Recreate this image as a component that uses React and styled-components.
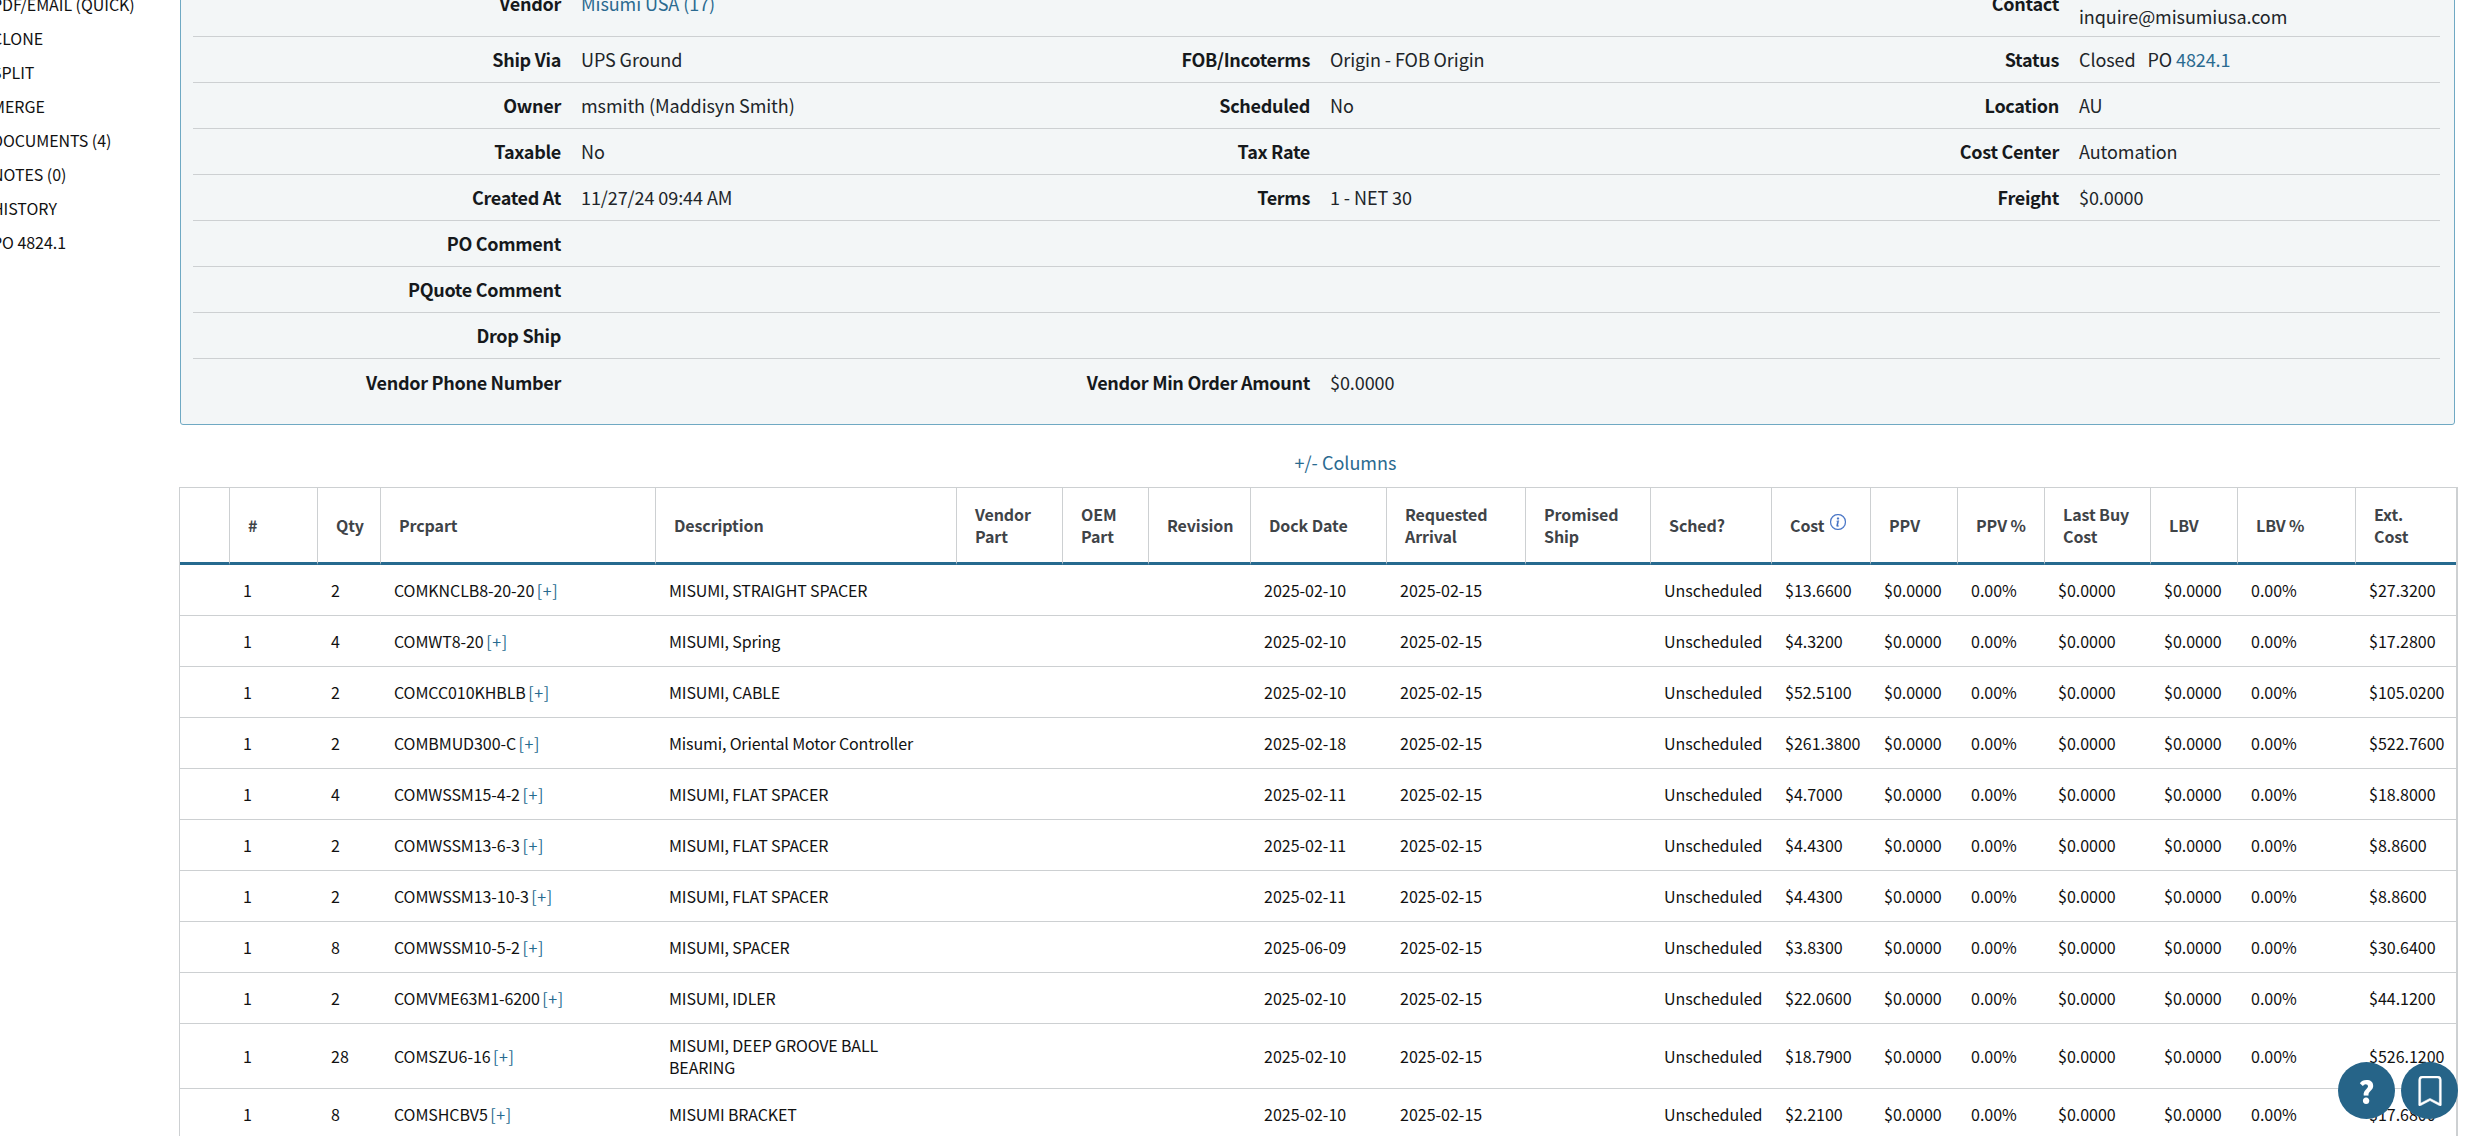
import React from 'react';
import styled, {createGlobalStyle} from 'styled-components';
import {BsBookmark, BsInfoCircle} from 'react-icons/bs';

const GlobalStyle = createGlobalStyle`
  html, body {
    margin: 0;
    height: 100%;
    overflow: hidden;
    background: #fff;
  }
  body {
    font-family: "Noto Sans CJK SC", "Liberation Sans", sans-serif;
    color: #212529;
  }
  * {
    box-sizing: border-box;
  }
`;

const Page = styled.div`
  display: grid;
  grid-template-columns: 186px 2279px;
  align-items: start;
  margin: -30px 0 0 -7px;
`;

const SideNav = styled.nav`
  display: flex;
  flex-direction: column;
  margin-left: -1px;
  padding-top: 17px;
`;

const SideLink = styled.a`
  height: 34px;
  line-height: 34px;
  font-size: 16px;
  letter-spacing: -0.05px;
  color: #111;
`;

const Main = styled.main`
  display: flex;
  flex-direction: column;
`;

const InfoPanel = styled.section`
  margin: 0 3px 0 1px;
  padding: 0 14px 19px 12px;
  background: #f3f6f7;
  border: 1px solid #6fa9c3;
  border-radius: 3px;
`;

const InfoRow = styled.div`
  display: grid;
  grid-template-columns: repeat(3, 1fr);
  height: ${(p) => (p.$first ? '66px' : '46px')};
  border-bottom: 1px solid #cdd0d2;
  &:last-child {
    border-bottom: none;
  }
`;

const FieldCell = styled.div`
  display: grid;
  grid-template-columns: 368px 1fr;
  column-gap: 20px;
  align-items: center;
  font-size: 18px;
  line-height: 25px;
`;

const Label = styled.div`
  font-weight: 600;
  letter-spacing: -0.3px;
  text-align: right;
  color: #16191c;
`;

const Value = styled.div`
  letter-spacing: -0.08px;
  color: #212529;
`;

const Link = styled.a`
  color: #2a6a90;
`;

const PartLink = styled(Link)`
  margin-left: -1px;
  letter-spacing: 0.6px;
  color: #266a8f;
`;

const ColumnsToggle = styled.div`
  height: 62px;
  padding: 25px 0 0 54px;
  text-align: center;
  font-size: 18px;
  line-height: 25px;
`;

const LinesTable = styled.table`
  width: 2279px;
  table-layout: fixed;
  border-collapse: separate;
  border-spacing: 0;
  border-top: 1px solid #cdd0d2;
  border-left: 1px solid #cdd0d2;
  border-right: 2px solid #cdd0d2;
`;

const LineCol = styled.col`
  width: ${(p) => p.$w}px;
`;

const HeadCell = styled.th`
  height: 77px;
  padding: 8px 18px;
  text-align: left;
  vertical-align: middle;
  white-space: nowrap;
  font-size: 16px;
  font-weight: 600;
  letter-spacing: -0.1px;
  line-height: 22px;
  color: #3f4448;
  border-right: 1px solid #cdd0d2;
  border-bottom: 3px solid #266a8f;
  &:last-child {
    border-right: none;
  }
`;

const InfoIcon = styled(BsInfoCircle)`
  margin-left: 2px;
  color: #3f6fc4;
  stroke: currentColor;
  stroke-width: 0.25;
  vertical-align: 2px;
`;

const Cell = styled.td`
  height: 51px;
  padding: 10px 13px;
  font-size: 16px;
  line-height: 22px;
  color: #111;
  vertical-align: middle;
  border-bottom: 1px solid #cdd0d2;
`;

const PartCell = styled(Cell)`
  letter-spacing: -0.08px;
`;

const DescCell = styled(Cell)`
  padding-right: 20px;
  letter-spacing: -0.15px;
`;

const FloatingActions = styled.div`
  position: fixed;
  right: 15px;
  bottom: 17px;
  display: flex;
  gap: 6px;
`;

const RoundButton = styled.button`
  display: flex;
  align-items: center;
  justify-content: center;
  width: 57px;
  height: 57px;
  padding: 0;
  border: none;
  border-radius: 50%;
  background: #266488;
  color: #fff;
  font-family: inherit;
  font-size: 30px;
  font-weight: 900;
`;

const BookmarkIcon = styled(BsBookmark)`
  stroke: currentColor;
  stroke-width: 0.3;
`;

const SIDE_LINKS = ['PDF/EMAIL (QUICK)', 'CLONE', 'SPLIT', 'MERGE', 'DOCUMENTS (4)', 'NOTES (0)', 'HISTORY', 'PO 4824.1'];

const INFO_ROWS = [
  [['Ship Via', 'UPS Ground'], ['FOB/Incoterms', 'Origin - FOB Origin'], ['Status', <>Closed&nbsp;&nbsp; PO <Link>4824.1</Link></>]],
  [['Owner', 'msmith (Maddisyn Smith)'], ['Scheduled', 'No'], ['Location', 'AU']],
  [['Taxable', 'No'], ['Tax Rate', ''], ['Cost Center', 'Automation']],
  [['Created At', '11/27/24 09:44 AM'], ['Terms', '1 - NET 30'], ['Freight', '$0.0000']],
  [['PO Comment', ''], ['', ''], ['', '']],
  [['PQuote Comment', ''], ['', ''], ['', '']],
  [['Drop Ship', ''], ['', ''], ['', '']],
  [['Vendor Phone Number', ''], ['Vendor Min Order Amount', '$0.0000'], ['', '']],
];

const COLUMNS = [
  {w: 50, title: ''},
  {w: 88, title: '#'},
  {w: 63, title: 'Qty'},
  {w: 275, title: 'Prcpart'},
  {w: 301, title: 'Description'},
  {w: 106, title: <>Vendor<br />Part</>},
  {w: 86, title: <>OEM<br />Part</>},
  {w: 102, title: 'Revision'},
  {w: 136, title: 'Dock Date'},
  {w: 139, title: <>Requested<br />Arrival</>},
  {w: 125, title: <>Promised<br />Ship</>},
  {w: 121, title: 'Sched?'},
  {w: 99, title: <>Cost <InfoIcon size={16} /></>},
  {w: 87, title: 'PPV'},
  {w: 87, title: 'PPV %'},
  {w: 106, title: <>Last Buy<br />Cost</>},
  {w: 87, title: 'LBV'},
  {w: 118, title: 'LBV %'},
  {w: 100, title: <>Ext.<br />Cost</>},
];

const LINES = [
  ['2', 'COMKNCLB8-20-20', 'MISUMI, STRAIGHT SPACER', '2025-02-10', '$13.6600', '$27.3200'],
  ['4', 'COMWT8-20', 'MISUMI, Spring', '2025-02-10', '$4.3200', '$17.2800'],
  ['2', 'COMCC010KHBLB', 'MISUMI, CABLE', '2025-02-10', '$52.5100', '$105.0200'],
  ['2', 'COMBMUD300-C', 'Misumi, Oriental Motor Controller', '2025-02-18', '$261.3800', '$522.7600'],
  ['4', 'COMWSSM15-4-2', 'MISUMI, FLAT SPACER', '2025-02-11', '$4.7000', '$18.8000'],
  ['2', 'COMWSSM13-6-3', 'MISUMI, FLAT SPACER', '2025-02-11', '$4.4300', '$8.8600'],
  ['2', 'COMWSSM13-10-3', 'MISUMI, FLAT SPACER', '2025-02-11', '$4.4300', '$8.8600'],
  ['8', 'COMWSSM10-5-2', 'MISUMI, SPACER', '2025-06-09', '$3.8300', '$30.6400'],
  ['2', 'COMVME63M1-6200', 'MISUMI, IDLER', '2025-02-10', '$22.0600', '$44.1200'],
  ['28', 'COMSZU6-16', 'MISUMI, DEEP GROOVE BALL BEARING', '2025-02-10', '$18.7900', '$526.1200'],
  ['8', 'COMSHCBV5', 'MISUMI BRACKET', '2025-02-10', '$2.2100', '$17.6800'],
];

const Field = ({label, value}) => (
  <FieldCell>
    <Label>{label}</Label>
    <Value>{value}</Value>
  </FieldCell>
);

const App = () => {
  return (
    <>
      <GlobalStyle />
      <Page>
        <SideNav>
          {SIDE_LINKS.map((item) => <SideLink key={item}>{item}</SideLink>)}
        </SideNav>
        <Main>
          <InfoPanel>
            <InfoRow $first>
              <Field label="Vendor" value={<Link>Misumi USA (17)</Link>} />
              <Field label="" value="" />
              <Field label="Contact" value={<>&nbsp;<br />inquire@misumiusa.com</>} />
            </InfoRow>
            {INFO_ROWS.map((row, i) => (
              <InfoRow key={i}>
                {row.map(([label, value], j) => <Field key={j} label={label} value={value} />)}
              </InfoRow>
            ))}
          </InfoPanel>
          <ColumnsToggle><Link>+/- Columns</Link></ColumnsToggle>
          <LinesTable>
            <colgroup>
              {COLUMNS.map((col, i) => <LineCol key={i} $w={col.w} />)}
            </colgroup>
            <thead>
              <tr>
                {COLUMNS.map((col, i) => <HeadCell key={i}>{col.title}</HeadCell>)}
              </tr>
            </thead>
            <tbody>
              {LINES.map(([qty, part, desc, dock, cost, ext]) => (
                <tr key={part}>
                  <Cell />
                  <Cell>1</Cell>
                  <Cell>{qty}</Cell>
                  <PartCell>{part} <PartLink>[+]</PartLink></PartCell>
                  <DescCell>{desc}</DescCell>
                  <Cell />
                  <Cell />
                  <Cell />
                  <Cell>{dock}</Cell>
                  <Cell>2025-02-15</Cell>
                  <Cell />
                  <Cell>Unscheduled</Cell>
                  <Cell>{cost}</Cell>
                  <Cell>$0.0000</Cell>
                  <Cell>0.00%</Cell>
                  <Cell>$0.0000</Cell>
                  <Cell>$0.0000</Cell>
                  <Cell>0.00%</Cell>
                  <Cell>{ext}</Cell>
                </tr>
              ))}
            </tbody>
          </LinesTable>
        </Main>
      </Page>
      <FloatingActions>
        <RoundButton>?</RoundButton>
        <RoundButton><BookmarkIcon size={30} /></RoundButton>
      </FloatingActions>
    </>
  );
};

export default App;
